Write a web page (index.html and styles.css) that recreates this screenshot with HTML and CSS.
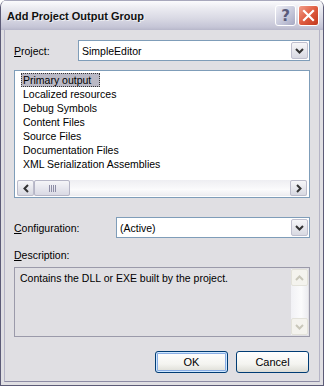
FILE: index.html
```html
<!DOCTYPE html>
<html lang="en">
<head>
  <meta charset="UTF-8" />
  <title>Add Project Output Group</title>
  <link rel="stylesheet" href="styles.css">
</head>
<body>
  <div class="window">
    <div class="titlebar">
      <span class="title">Add Project Output Group</span>
      <div class="caption-buttons">
        <span class="cap-btn help">?</span>
        <span class="cap-btn close">
          <svg width="13" height="13" viewBox="0 0 13 13"><path d="M2 2 L11 11 M11 2 L2 11" stroke="#fff" stroke-width="2.2" stroke-linecap="square"/></svg>
        </span>
      </div>
    </div>

    <div class="client">
      <div class="row project-row">
        <label class="label"><u>P</u>roject:</label>
        <div class="combo project-combo">
          <span class="combo-text">SimpleEditor</span>
          <span class="drop-btn">
            <svg width="9" height="6" viewBox="0 0 9 6"><path d="M1 1 L4.5 4.5 L8 1" fill="none" stroke="#333" stroke-width="2"/></svg>
          </span>
        </div>
      </div>

      <div class="listbox">
        <ul class="items">
          <li class="selected">Primary output</li>
          <li>Localized resources</li>
          <li>Debug Symbols</li>
          <li>Content Files</li>
          <li>Source Files</li>
          <li>Documentation Files</li>
          <li>XML Serialization Assemblies</li>
        </ul>
        <div class="hscroll">
          <span class="sb-btn">
            <svg width="6" height="9" viewBox="0 0 6 9"><path d="M5 1 L1.5 4.5 L5 8" fill="none" stroke="#333" stroke-width="2"/></svg>
          </span>
          <span class="sb-thumb"><span class="grip"></span></span>
          <span class="sb-track"></span>
          <span class="sb-btn">
            <svg width="6" height="9" viewBox="0 0 6 9"><path d="M1 1 L4.5 4.5 L1 8" fill="none" stroke="#333" stroke-width="2"/></svg>
          </span>
        </div>
      </div>

      <div class="row config-row">
        <label class="label"><u>C</u>onfiguration:</label>
        <div class="combo config-combo">
          <span class="combo-text">(Active)</span>
          <span class="drop-btn">
            <svg width="9" height="6" viewBox="0 0 9 6"><path d="M1 1 L4.5 4.5 L8 1" fill="none" stroke="#333" stroke-width="2"/></svg>
          </span>
        </div>
      </div>

      <div class="desc-label"><u>D</u>escription:</div>
      <div class="descbox">
        <p class="desc-text">Contains the DLL or EXE built by the project.</p>
        <div class="vscroll">
          <span class="sb-btn disabled">
            <svg width="9" height="6" viewBox="0 0 9 6"><path d="M1 5 L4.5 1.5 L8 5" fill="none" stroke="#c9c7ba" stroke-width="2"/></svg>
          </span>
          <span class="vtrack"></span>
          <span class="sb-btn disabled">
            <svg width="9" height="6" viewBox="0 0 9 6"><path d="M1 1 L4.5 4.5 L8 1" fill="none" stroke="#c9c7ba" stroke-width="2"/></svg>
          </span>
        </div>
      </div>

      <div class="buttons">
        <button class="btn default">OK</button>
        <button class="btn">Cancel</button>
      </div>
    </div>
  </div>
</body>
</html>
```

FILE: styles.css
```css
* {
  box-sizing: border-box;
}

body {
  margin: 0;
  background: #fff;
  font-family: "Liberation Sans", Arial, sans-serif;
  font-size: 10.5px;
  color: #000;
}

.window {
  width: 324px;
  height: 386px;
  display: flex;
  flex-direction: column;
  background: #e0dfe3;
  border: 1px solid #5c5b77;
  border-top: none;
  border-radius: 7px 7px 0 0;
  overflow: hidden;
}

.titlebar {
  height: 30px;
  flex: none;
  display: flex;
  align-items: center;
  justify-content: space-between;
  padding: 0 4px 0 6px;
  background: linear-gradient(#fbfbfd 0%, #ebebf1 25%, #d9d9e4 60%, #c5c5d6 90%, #b7b7ca 100%);
  border-top: 1px solid #a8a8bc;
}

.title {
  font-weight: bold;
  font-size: 11px;
  color: #111;
  text-shadow: 1px 1px 0 rgba(255, 255, 255, 0.6);
}

.caption-buttons {
  display: flex;
  gap: 2px;
}

.cap-btn {
  width: 21px;
  height: 21px;
  border-radius: 3px;
  border: 1px solid #fff;
  display: flex;
  align-items: center;
  justify-content: center;
}

.help {
  background: linear-gradient(135deg, #eeeef5, #c3c5d8 60%, #a6a8c2);
  color: #5a5b7a;
  font-weight: bold;
  font-size: 15px;
  font-family: "DejaVu Sans", sans-serif;
}

.close {
  background: linear-gradient(135deg, #f29e8b, #df5c40 50%, #c2371c);
}

.client {
  flex: 1;
  margin: 0 3px 3px;
  border: 1px solid #b5b4c6;
  border-top: none;
  border-bottom-color: #8c8ba4;
  padding: 10px 9px 0 9px;
  display: flex;
  flex-direction: column;
}

.row {
  display: flex;
  align-items: center;
  height: 21px;
}

.label {
  flex: none;
}

.project-row .label {
  width: 64px;
}

.config-row {
  margin-top: 19px;
}

.config-row .label {
  width: 102px;
}

.combo {
  flex: 1;
  height: 21px;
  background: #fff;
  border: 1px solid #7f9db9;
  display: flex;
  align-items: center;
  justify-content: space-between;
  padding: 0 1px 0 3px;
}

.drop-btn {
  width: 17px;
  height: 17px;
  border: 1px solid #bfbfce;
  border-radius: 2px;
  background: linear-gradient(#f6f6f8, #d8d9e2);
  display: flex;
  align-items: center;
  justify-content: center;
}

.listbox {
  margin-top: 9px;
  height: 128px;
  background: #fff;
  border: 1px solid #7f9db9;
  display: flex;
  flex-direction: column;
  justify-content: space-between;
  padding: 2px 1px 1px;
}

.items {
  list-style: none;
  margin: 0;
  padding: 0 0 0 5px;
}

.items li {
  height: 14px;
  line-height: 14px;
  padding: 0 2px;
  white-space: nowrap;
}

.items li.selected {
  display: inline-block;
  width: 79px;
  background: #bab9c5;
  outline: 1px dotted #333;
  outline-offset: -1px;
}

.hscroll {
  height: 16px;
  display: flex;
  background: linear-gradient(#eeeef2, #fbfbfc 60%, #ececf0);
  margin: 0 1px;
}

.sb-btn {
  width: 17px;
  height: 16px;
  flex: none;
  border: 1px solid #bcbccb;
  border-radius: 2px;
  background: linear-gradient(#f7f7f9, #d7d8e1);
  display: flex;
  align-items: center;
  justify-content: center;
}

.sb-thumb {
  width: 36px;
  border: 1px solid #b5b5c6;
  border-radius: 2px;
  background: linear-gradient(#f5f5f8, #d9d9e4);
  display: flex;
  align-items: center;
  justify-content: center;
}

.grip {
  width: 7px;
  height: 7px;
  background: repeating-linear-gradient(90deg, #8d8da6 0 1px, transparent 1px 2px);
}

.sb-track {
  flex: 1;
}

.desc-label {
  margin-top: 10px;
  height: 19px;
  line-height: 14px;
}

.descbox {
  height: 70px;
  border: 1px solid #9b9aaa;
  display: flex;
  justify-content: space-between;
  padding: 1px;
}

.desc-text {
  margin: 3px 0 0 4px;
}

.vscroll {
  width: 17px;
  display: flex;
  flex-direction: column;
  background: linear-gradient(90deg, #f1f1f5, #fbfbfc 60%, #ececf0);
}

.vscroll .sb-btn {
  height: 17px;
}

.sb-btn.disabled {
  background: #f4f3ee;
  border-color: #e3e2da;
}

.vtrack {
  flex: 1;
}

.buttons {
  margin-top: 14px;
  display: flex;
  justify-content: flex-end;
  gap: 8px;
  padding-right: 1px;
}

.btn {
  width: 73px;
  height: 22px;
  font-family: "Liberation Sans", Arial, sans-serif;
  font-size: 11px;
  color: #000;
  border: 1px solid #003c74;
  border-radius: 3px;
  background: linear-gradient(#ffffff, #f4f4f0 60%, #dcdcd5);
  padding: 0;
}

.btn.default {
  box-shadow: inset 0 0 0 1px #cee7ff, inset 0 0 0 2px #89ade4;
}
```
